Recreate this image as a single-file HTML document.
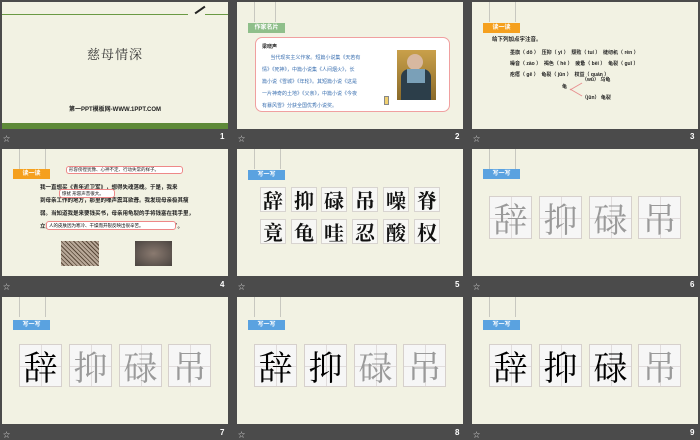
<!DOCTYPE html>
<html><head><meta charset="utf-8"><style>
*{margin:0;padding:0;box-sizing:border-box}
body{width:700px;height:438px;background:#4b4b4b;position:relative;overflow:hidden;font-family:"Liberation Sans","Noto Sans CJK SC",sans-serif}
.s{position:absolute;width:226px;height:127px;background:#f2f2e3;overflow:hidden}
.a{position:absolute}
.lab{position:absolute;color:#ddd;font-size:7px}
.num{position:absolute;color:#fff;font-size:8px;font-weight:bold}
.str{position:absolute;top:0;width:1px;height:20px;background:#c8c8c0}
.tag{position:absolute;left:11px;top:21px;width:37px;height:10px;color:#fff;font-size:6px;text-align:center;line-height:10px;font-weight:bold}
.b{position:absolute;background:#f7f7f5;border:1px solid #d8d4d0;font-family:"Noto Serif CJK SC",serif;font-weight:bold;text-align:center;color:#111}
.g{position:absolute;background:#f6f6f6;border:1px solid #d6d0cc;font-family:"Noto Serif CJK SC",serif;text-align:center;width:43px;height:43px;font-size:34px;line-height:42px}
.g:before{content:"";position:absolute;left:50%;top:0;bottom:0;border-left:1px solid #e0dcdc}
.g:after{content:"";position:absolute;top:50%;left:0;right:0;border-top:1px solid #e0dcdc}
.g span{position:relative;z-index:1}
.gr{color:#9a9a9a}.bk{color:#000}
.t{position:absolute;font-size:5px;color:#222;white-space:nowrap}
</style></head><body>

<!-- slide 1 -->
<div class="s" style="left:2px;top:2px">
 <div class="a" style="left:0;top:12px;width:186px;height:1px;background:#6a9a44"></div>
 <div class="a" style="left:203px;top:12px;width:23px;height:1px;background:#6a9a44"></div>
 <div class="a" style="left:192px;top:7px;width:12px;height:2px;background:#222;transform:rotate(-35deg)"></div>
 <div class="a" style="left:0;top:42px;width:226px;text-align:center;font-family:'Noto Serif CJK SC',serif;font-size:13px;color:#333;letter-spacing:1px">慈母情深</div>
 <div class="a" style="left:0;top:102px;width:226px;text-align:center;font-size:6px;font-weight:bold;color:#222">第一PPT模板网-WWW.1PPT.COM</div>
 <div class="a" style="left:0;top:121px;width:226px;height:6px;background:#5e8a38"></div>
</div>
<div class="lab" style="left:3px;top:134px">☆</div><div class="num" style="left:220px;top:132px">1</div>

<!-- slide 2 -->
<div class="s" style="left:237px;top:2px">
 <div class="str" style="left:17px"></div><div class="str" style="left:38px"></div>
 <div class="tag" style="background:#8fbf8a;top:21px;">作家名片</div>
 <div class="a" style="left:18px;top:35px;width:195px;height:75px;border:1.5px solid #f0a0a0;border-radius:7px;background:#fff"></div>
 <div class="t" style="left:25px;top:41px;font-weight:bold;color:#222">梁晓声</div>
 <div class="t" style="left:25px;top:50px;color:#3a6fb0;line-height:12px">&nbsp;&nbsp;&nbsp;&nbsp;&nbsp;&nbsp;当代现实主义作家。短篇小说集《天若有<br>情》《死神》，中篇小说集《人间烟火》，长<br>篇小说《雪城》《年轮》。其短篇小说《这是<br>一片神奇的土地》《父亲》，中篇小说《今夜<br>有暴风雪》分获全国优秀小说奖。</div>
 <div class="a" style="left:160px;top:48px;width:39px;height:50px;background:linear-gradient(#c9a04a,#8a6a2a)"></div>
 <div class="a" style="left:170px;top:52px;width:16px;height:16px;border-radius:50%;background:#d8b8a0"></div>
 <div class="a" style="left:164px;top:67px;width:30px;height:31px;background:#2c3e4a;border-radius:8px 8px 0 0"></div>
 <div class="a" style="left:170px;top:67px;width:18px;height:14px;background:#7aa0b8"></div>
 <div class="a" style="left:147px;top:94px;width:5px;height:9px;background:#f0d070;border:1px solid #888"></div>
</div>
<div class="lab" style="left:238px;top:134px">☆</div><div class="num" style="left:455px;top:132px">2</div>

<!-- slide 3 -->
<div class="s" style="left:472px;top:2px">
 <div class="str" style="left:17px"></div><div class="str" style="left:43px"></div>
 <div class="tag" style="background:#f5a01e">读一读</div>
 <div class="t" style="left:20px;top:33px;font-size:5.5px;font-weight:bold">给下列加点字注音。</div>
 <div class="t" style="left:38px;top:46px;line-height:11px;font-weight:bold">墨旗（ dō ）&nbsp;&nbsp;压抑（ yì ）&nbsp;&nbsp;颓败（ tuí ）&nbsp;&nbsp;缝纫机（ rèn ）<br>噪音（ zào ）&nbsp;&nbsp;褐色（ hè ）&nbsp;&nbsp;疲惫（ bèi ）&nbsp;&nbsp;龟裂（ guī ）<br>疙瘩（ gē ）&nbsp;&nbsp;龟裂（ jūn ）&nbsp;&nbsp;权益（ quán ）</div>
 <div class="t" style="left:90px;top:81px;font-weight:bold">龟</div>
 <div class="a" style="left:97px;top:84px;width:14px;height:1px;background:#e89090;transform:rotate(-30deg)"></div>
 <div class="a" style="left:97px;top:90px;width:14px;height:1px;background:#e89090;transform:rotate(30deg)"></div>
 <div class="t" style="left:110px;top:74px;font-weight:bold">（wū） 乌龟</div>
 <div class="t" style="left:110px;top:92px;font-weight:bold">（jūn） 龟裂</div>
</div>
<div class="lab" style="left:473px;top:134px">☆</div><div class="num" style="left:690px;top:132px">3</div>

<!-- slide 4 -->
<div class="s" style="left:2px;top:149px">
 <div class="str" style="left:17px"></div><div class="str" style="left:43px"></div>
 <div class="tag" style="background:#f5a01e;top:20px">读一读</div>
 <div class="a" style="left:64px;top:17px;width:117px;height:8px;border:1px solid #e88;border-radius:3px;background:#fff"></div>
 <div class="t" style="left:67px;top:18px;font-size:4.5px">形容傍徨犹豫、心神不定、行动失常的样子。</div>
 <div class="t" style="left:38px;top:33px;font-size:5.5px;line-height:13px;font-weight:bold">我一直想买《青年近卫军》，想得失魂落魄。于是，我来<br>到母亲工作的地方，那里的噪声震耳欲聋。我发现母亲极其瘦<br>弱。当知道我是来要钱买书，母亲用龟裂的手将钱塞在我手里，<br>立刻又投入了工作之中……我鼻子一酸，攥着钱跑出去了。</div>
 <div class="a" style="left:57px;top:40px;width:56px;height:9px;border:1px solid #e88;border-radius:3px;background:#fff;font-size:4.5px;line-height:8px;padding-left:2px">惊扰 形容声音很大。</div>
 <div class="a" style="left:44px;top:72px;width:130px;height:9px;border:1px solid #e88;border-radius:3px;background:#fff;font-size:4.5px;line-height:8px;padding-left:2px">人的皮肤因为寒冷、干燥而开裂反映出很辛苦。</div>
 <div class="a" style="left:59px;top:92px;width:38px;height:25px;background:repeating-linear-gradient(45deg,#b8a898 0 2px,#5a4a3a 2px 3px)"></div>
 <div class="a" style="left:133px;top:92px;width:37px;height:25px;background:radial-gradient(#8a7a70,#4a4440)"></div>
</div>
<div class="lab" style="left:3px;top:282px">☆</div><div class="num" style="left:220px;top:280px">4</div>

<!-- slide 5 -->
<div class="s" style="left:237px;top:149px">
 <div class="str" style="left:17px"></div><div class="str" style="left:43px"></div>
 <div class="tag" style="background:#5aa2e0">写一写</div>
 <div class="b" style="left:23px;top:38px;width:26px;height:25px;font-size:20px;line-height:23px">辞</div>
 <div class="b" style="left:54px;top:38px;width:26px;height:25px;font-size:20px;line-height:23px">抑</div>
 <div class="b" style="left:84px;top:38px;width:26px;height:25px;font-size:20px;line-height:23px">碌</div>
 <div class="b" style="left:115px;top:38px;width:26px;height:25px;font-size:20px;line-height:23px">吊</div>
 <div class="b" style="left:146px;top:38px;width:26px;height:25px;font-size:20px;line-height:23px">噪</div>
 <div class="b" style="left:177px;top:38px;width:26px;height:25px;font-size:20px;line-height:23px">脊</div>
 <div class="b" style="left:23px;top:70px;width:26px;height:25px;font-size:20px;line-height:23px">竟</div>
 <div class="b" style="left:54px;top:70px;width:26px;height:25px;font-size:20px;line-height:23px">龟</div>
 <div class="b" style="left:84px;top:70px;width:26px;height:25px;font-size:20px;line-height:23px">哇</div>
 <div class="b" style="left:115px;top:70px;width:26px;height:25px;font-size:20px;line-height:23px">忍</div>
 <div class="b" style="left:146px;top:70px;width:26px;height:25px;font-size:20px;line-height:23px">酸</div>
 <div class="b" style="left:177px;top:70px;width:26px;height:25px;font-size:20px;line-height:23px">权</div>
</div>
<div class="lab" style="left:238px;top:282px">☆</div><div class="num" style="left:455px;top:280px">5</div>

<!-- slide 6 -->
<div class="s" style="left:472px;top:149px">
 <div class="str" style="left:17px"></div><div class="str" style="left:43px"></div>
 <div class="tag" style="background:#5aa2e0;top:20px">写一写</div>
 <div class="g gr" style="left:17px;top:47px"><span>辞</span></div>
 <div class="g gr" style="left:67px;top:47px"><span>抑</span></div>
 <div class="g gr" style="left:117px;top:47px"><span>碌</span></div>
 <div class="g gr" style="left:166px;top:47px"><span>吊</span></div>
</div>
<div class="lab" style="left:473px;top:282px">☆</div><div class="num" style="left:690px;top:280px">6</div>

<!-- slide 7 -->
<div class="s" style="left:2px;top:297px">
 <div class="str" style="left:17px"></div><div class="str" style="left:43px"></div>
 <div class="tag" style="background:#5aa2e0;top:23px">写一写</div>
 <div class="g bk" style="left:17px;top:47px"><span>辞</span></div>
 <div class="g gr" style="left:67px;top:47px"><span>抑</span></div>
 <div class="g gr" style="left:117px;top:47px"><span>碌</span></div>
 <div class="g gr" style="left:166px;top:47px"><span>吊</span></div>
</div>
<div class="lab" style="left:3px;top:430px">☆</div><div class="num" style="left:220px;top:428px">7</div>

<!-- slide 8 -->
<div class="s" style="left:237px;top:297px">
 <div class="str" style="left:17px"></div><div class="str" style="left:43px"></div>
 <div class="tag" style="background:#5aa2e0;top:23px">写一写</div>
 <div class="g bk" style="left:17px;top:47px"><span>辞</span></div>
 <div class="g bk" style="left:67px;top:47px"><span>抑</span></div>
 <div class="g gr" style="left:117px;top:47px"><span>碌</span></div>
 <div class="g gr" style="left:166px;top:47px"><span>吊</span></div>
</div>
<div class="lab" style="left:238px;top:430px">☆</div><div class="num" style="left:455px;top:428px">8</div>

<!-- slide 9 -->
<div class="s" style="left:472px;top:297px">
 <div class="str" style="left:17px"></div><div class="str" style="left:43px"></div>
 <div class="tag" style="background:#5aa2e0;top:23px">写一写</div>
 <div class="g bk" style="left:17px;top:47px"><span>辞</span></div>
 <div class="g bk" style="left:67px;top:47px"><span>抑</span></div>
 <div class="g bk" style="left:117px;top:47px"><span>碌</span></div>
 <div class="g gr" style="left:166px;top:47px"><span>吊</span></div>
</div>
<div class="lab" style="left:473px;top:430px">☆</div><div class="num" style="left:690px;top:428px">9</div>

</body></html>
